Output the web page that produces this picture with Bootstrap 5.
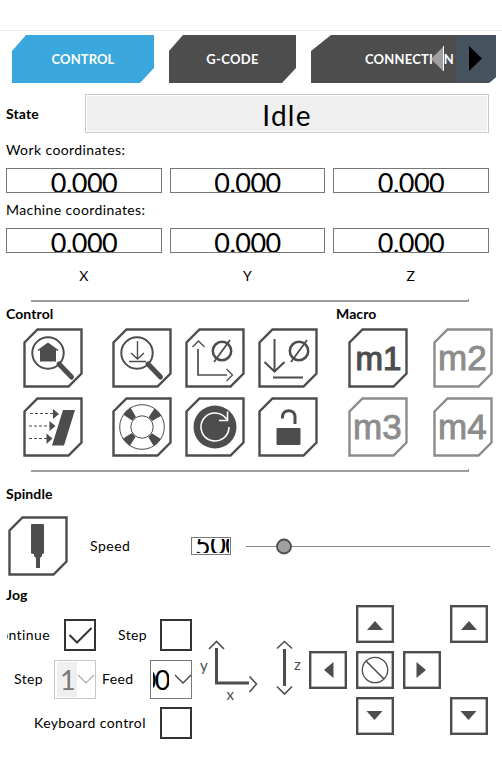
<!DOCTYPE html>
<html lang="en">
<head>
<meta charset="utf-8">
<meta name="viewport" content="width=device-width, initial-scale=1">
<title>Machine control</title>
<link href="https://cdn.jsdelivr.net/npm/bootstrap@5.3.0/dist/css/bootstrap.min.css" rel="stylesheet">
<style>
body{font-family:Lato,"Open Sans",sans-serif;font-size:14px;line-height:20px;color:#000;background:#fff;letter-spacing:.4px}
.panel{width:502px;height:761px}
.panel svg{display:block;flex:none}
.panel svg text{letter-spacing:0}
.topbar{height:31px;border-bottom:1px solid #eee}
.tabs{height:63px;padding:4px 0 0 12px;gap:15px}
.tab{height:48px;background:#4d4d4d;color:#fff;border:0;padding:0;font-weight:700;font-size:13px;letter-spacing:.1px;clip-path:polygon(14px 0,100% 0,100% 33px,calc(100% - 14px) 100%,0 100%,0 16px)}
.t1{width:142px;background:#3aa8dc}.t2{width:127px;letter-spacing:.3px}
.t3{width:185px;clip-path:polygon(20px 0,100% 0,100% 42px,calc(100% - 7px) 100%,0 100%,0 16px)}
.t3 .caption{padding-left:54px;text-align:left;display:block;letter-spacing:.2px}
.scroll-next{right:0;top:0;width:40px;height:47px;background:#46535f}
.scroll-prev{left:119px;top:11px}
.hd{font-weight:700;letter-spacing:.1px}
.state{height:39px;padding-left:6px}
.state .hd{width:79px}
.state-box{width:404px;height:39px;border:1px solid #c8c8c8;background:#efefef;box-shadow:inset 0 0 0 1px #fff;font-size:28px;letter-spacing:1.2px;padding-top:2px}
.coords{grid-template-columns:156px 155px 156px;column-gap:8px;padding-left:6px}
.readout{height:25px;border:1px solid #777;overflow:hidden;text-align:center;font-size:27px;line-height:27px;letter-spacing:-.5px}
.lab{height:35px;padding:7px 0 0 6px}
.axes{height:47px;padding-top:13px;text-align:center}
.rule{height:2px;width:438px;margin-left:31px;background:#9c9c9c}
.tick{height:3px;width:1px;background:#9c9c9c;margin-left:auto;margin-top:-1px}
.heads{height:26px;padding:2px 0 0 6px}
.heads .hd:first-child{width:330px}
.keys{grid-template-columns:89px 73px 73px 90px 85px 60px;row-gap:9px;padding-left:23px;height:142px;align-content:start;color:#4d4d4d}
.spin-head{height:44px;padding-top:12px}
.spin{height:60px;padding-left:8px}
.spin-name{width:101px;margin-left:22px;letter-spacing:.5px}
.speed{width:40px;height:18px;border:1px solid #777;padding:1px 1px 1px 3px}
.speed div{height:14px;overflow:hidden;font-size:27px;line-height:11px;letter-spacing:-.5px}
.slider{margin-left:15px}
.jog-head{height:25px;padding:9px 0 0 6px}
.jog-head .hd{height:17px;overflow:hidden}
.jog{grid-template-columns:200px 109px 190px;height:134px}
.opts{padding-top:18px}
.box{width:32px;height:32px;border:2px solid #333}
.combo{width:42px;height:39px;border:1px solid #777;overflow:hidden;font-size:27px}
.combo.off{border-color:#c8c8c8;color:#777}
.combo-val{width:20px;height:35px;margin-left:2px;padding:8px 0 0 3px;background:#efefef}
.combo-feed{width:16px;height:35px;margin-left:2px;padding-top:8px;letter-spacing:-1.5px}
.opt-row{height:32px}.opt-row.mid{height:56px}
.clip{width:43px;overflow:hidden;direction:rtl;white-space:nowrap;margin-left:7px}
.w42{width:42px;margin-left:22px}.w40{width:40px;margin-left:14px}.w48{width:48px;margin-left:6px}.w126{width:126px;margin-left:34px}
.compass{margin-top:4px}
.pad{grid-template-columns:38px 38px 38px 38px;column-gap:9px;row-gap:8px;align-content:start;padding-top:4px}
</style>
<script src="https://cdn.jsdelivr.net/npm/bootstrap@5.3.0/dist/js/bootstrap.bundle.min.js"></script>
</head>
<body>
<svg width="0" height="0" class="position-absolute" aria-hidden="true">
<defs>
<path id="frame" d="M14.500 1.500H58.500V45.500L45.500 58.500H1.500V14.500Z" fill="#fff" stroke="currentColor" stroke-width="2.400"/>
<g id="lens"><circle cx="25" cy="25" r="15.700" fill="none" stroke="currentColor" stroke-width="2"/><path d="M36 36L48.500 49" stroke="currentColor" stroke-width="5" stroke-linecap="round"/></g>
<rect id="sq" x="1.200" y="1.200" width="35.600" height="35.600" fill="#fff" stroke="#4d4d4d" stroke-width="2.400"/>
<g id="zero" fill="none" stroke="currentColor"><circle cx="37" cy="23" r="9.200" stroke-width="2.500"/><path d="M29 34L45 12" stroke-width="1.800"/></g>
</defs>
</svg>
<main class="panel overflow-hidden">
<header class="topbar"></header>
<nav class="tabs d-flex">
<button class="tab t1">CONTROL</button>
<button class="tab t2">G-CODE</button>
<button class="tab t3 position-relative"><span class="caption">CONNECTION</span>
<svg class="scroll-prev position-absolute" width="15" height="27"><path d="M1 13L13 1V25Z" fill="#a0a0a0"/><path d="M13.500 0V25" stroke="#fff"/></svg>
<span class="scroll-next position-absolute"><svg width="40" height="47"><path d="M13 11V36L26 23.500Z" fill="#000"/></svg></span></button>
</nav>
<section class="state d-flex align-items-center"><span class="hd">State</span><div class="state-box d-flex align-items-center justify-content-center">Idle</div></section>
<div class="lab">Work coordinates:</div>
<section class="coords d-grid"><div class="readout">0.000</div><div class="readout">0.000</div><div class="readout">0.000</div></section>
<div class="lab">Machine coordinates:</div>
<section class="coords d-grid"><div class="readout">0.000</div><div class="readout">0.000</div><div class="readout">0.000</div><div class="axes">X</div><div class="axes">Y</div><div class="axes">Z</div></section>
<div class="rule d-flex"><div class="tick"></div></div>
<div class="heads d-flex"><span class="hd">Control</span><span class="hd">Macro</span></div>
<section class="keys d-grid">
<svg width="60" height="60"><use href="#frame"/><use href="#lens"/><path d="M14.500 22L25 14.500L35.500 22L34.500 23L33 22V33.500H17V22L15.500 23Z" fill="currentColor"/></svg>
<svg width="60" height="60"><use href="#frame"/><use href="#lens"/><path d="M25.500 13V31M19 25L25.500 31L32 25M17 33.500H34" fill="none" stroke="currentColor" stroke-width="1.400"/></svg>
<svg width="60" height="60"><use href="#frame"/><use href="#zero"/><path d="M13 21V47H42" fill="none" stroke="currentColor" stroke-width="1.700"/><path d="M7.500 19L13.500 13L19.500 19M41.500 41L47.500 47L41.500 53" fill="none" stroke="currentColor" stroke-width="1.300"/></svg>
<svg width="60" height="60"><use href="#frame"/><g transform="translate(4)"><use href="#zero"/></g><path d="M16.500 11V43M6.500 34L16.500 43.500L26.500 34M15 49.500H45" fill="none" stroke="currentColor" stroke-width="2"/></svg>
<svg width="60" height="60"><use href="#frame"/><text x="7.500" y="42" font-family="Liberation Sans" font-size="33" fill="currentColor" stroke="currentColor" stroke-width="1.200">m1</text></svg>
<svg width="60" height="60" color="#8c8c8c"><use href="#frame"/><text x="5" y="42" font-family="Liberation Sans" font-size="35" fill="currentColor" stroke="currentColor" stroke-width=".900">m2</text></svg>
<svg width="60" height="60"><use href="#frame"/><path d="M7 16.500H31M6 29H28M6 41.500H24" stroke="currentColor" stroke-width="1.200" stroke-dasharray="3 2"/><path d="M30 12L36 17L30 22ZM26.500 24L32.500 29L26.500 34ZM23.500 36.500L29.500 41.500L23.500 47ZM40 13H52L41 48.500H29Z" fill="currentColor"/></svg>
<svg width="60" height="60"><use href="#frame"/><circle cx="30" cy="30" r="17" fill="none" stroke="currentColor" stroke-width="10.500" stroke-dasharray="7.500 19.200" stroke-dashoffset="-9.600"/><circle cx="30" cy="30" r="22.300" fill="none" stroke="currentColor"/><circle cx="30" cy="30" r="11.200" fill="none" stroke="currentColor"/></svg>
<svg width="60" height="60"><use href="#frame"/><circle cx="30" cy="30" r="21.500" fill="currentColor"/><path d="M44 30A14 14 0 1 1 41.500 22M34 23.500H42.500V14.500" fill="none" stroke="#fff" stroke-width="1.600"/></svg>
<svg width="60" height="60"><use href="#frame"/><rect x="18.500" y="31" width="24" height="17" rx="1" fill="currentColor"/><path d="M24.500 21.500V20C24.500 11.500 37 11.500 37 20V27" fill="none" stroke="currentColor" stroke-width="3"/></svg>
<svg width="60" height="60" color="#8c8c8c"><use href="#frame"/><text x="5" y="42" font-family="Liberation Sans" font-size="35" fill="currentColor" stroke="currentColor" stroke-width=".900">m3</text></svg>
<svg width="60" height="60" color="#8c8c8c"><use href="#frame"/><text x="5" y="42" font-family="Liberation Sans" font-size="35" fill="currentColor" stroke="currentColor" stroke-width=".900">m4</text></svg>
</section>
<div class="rule d-flex"><div class="tick"></div></div>
<div class="heads spin-head d-flex"><span class="hd">Spindle</span></div>
<section class="spin d-flex align-items-center">
<svg width="60" height="60" color="#4d4d4d"><use href="#frame"/><path d="M24 8H35Q36 8 36 9V37Q36 38 34 38V40L32 42V52H28V42L26 40V38Q23 38 23 37V9Q23 8 24 8Z" fill="currentColor"/></svg>
<span class="spin-name">Speed</span><div class="speed"><div>500</div></div>
<svg class="slider" width="244" height="18"><path d="M0 9.500H244" stroke="#888"/><circle cx="38" cy="9.500" r="7" fill="#a0a0a0" stroke="#4d4d4d" stroke-width="1.800"/></svg>
</section>
<div class="jog-head"><div class="hd">Jog</div></div>
<section class="jog d-grid">
<div class="opts d-flex flex-column">
<div class="opt-row d-flex align-items-center"><span class="clip">Continue</span><span class="box" style="margin-left:14px"><svg width="28" height="28"><path d="M3.500 14L11 21.500L25.500 7" fill="none" stroke="#333" stroke-width="2"/></svg></span><span class="w42">Step</span><span class="box"></span></div>
<div class="opt-row mid d-flex align-items-center"><span class="w40">Step</span><div class="combo off d-flex align-items-center"><span class="combo-val">1</span><svg width="18" height="14"><path d="M1 3L9 11L17 3" fill="none" stroke="#aaa" stroke-width="1.200"/></svg></div><span class="w48">Feed</span><div class="combo d-flex align-items-center"><div class="combo-feed overflow-hidden d-flex justify-content-end"><span>00</span></div><svg class="ms-1" width="18" height="14"><path d="M2 3L10 11L18 3" fill="none" stroke="#444" stroke-width="1.300"/></svg></div></div>
<div class="opt-row d-flex align-items-center"><span class="w126">Keyboard control</span><span class="box"></span></div>
</div>
<svg class="compass" width="109" height="120"><g fill="none" stroke="#4d4d4d"><path d="M16.500 43V78H49" stroke-width="3"/><path d="M9 44L16.500 36.500L24 44M49.500 71.500L56.500 79L49.500 87M77 43.500L84.500 36.500L92 43.500M77 81.500L84.500 89L92 81.500" stroke-width="1.600"/><path d="M84.500 44V81" stroke-width="3"/></g><g fill="#4d4d4d" font-size="15"><text x="0" y="66">y</text><text x="26.500" y="95">x</text><text x="94" y="65">z</text></g></svg>
<div class="pad d-grid">
<span></span>
<svg width="38" height="38"><use href="#sq"/><path d="M11 25L19 16L27 25Z" fill="#4d4d4d"/></svg>
<span></span>
<svg width="38" height="38"><use href="#sq"/><path d="M11 25L19 16L27 25Z" fill="#4d4d4d"/></svg>
<svg width="38" height="38"><use href="#sq"/><path d="M15 19L24.500 11V27Z" fill="#4d4d4d"/></svg>
<svg width="38" height="38"><use href="#sq"/><circle cx="19" cy="19" r="12.700" fill="none" stroke="#4d4d4d" stroke-width="1.300"/><path d="M10 10L28 28" stroke="#4d4d4d" stroke-width="1.600"/></svg>
<svg width="38" height="38"><use href="#sq"/><path d="M23 19L13.500 11V27Z" fill="#4d4d4d"/></svg>
<span></span><span></span>
<svg width="38" height="38"><use href="#sq"/><path d="M10.500 14L18.500 23L26.500 14Z" fill="#4d4d4d"/></svg>
<span></span>
<svg width="38" height="38"><use href="#sq"/><path d="M10.500 14L18.500 23L26.500 14Z" fill="#4d4d4d"/></svg>
</div>
</section>
</main>
</body>
</html>
